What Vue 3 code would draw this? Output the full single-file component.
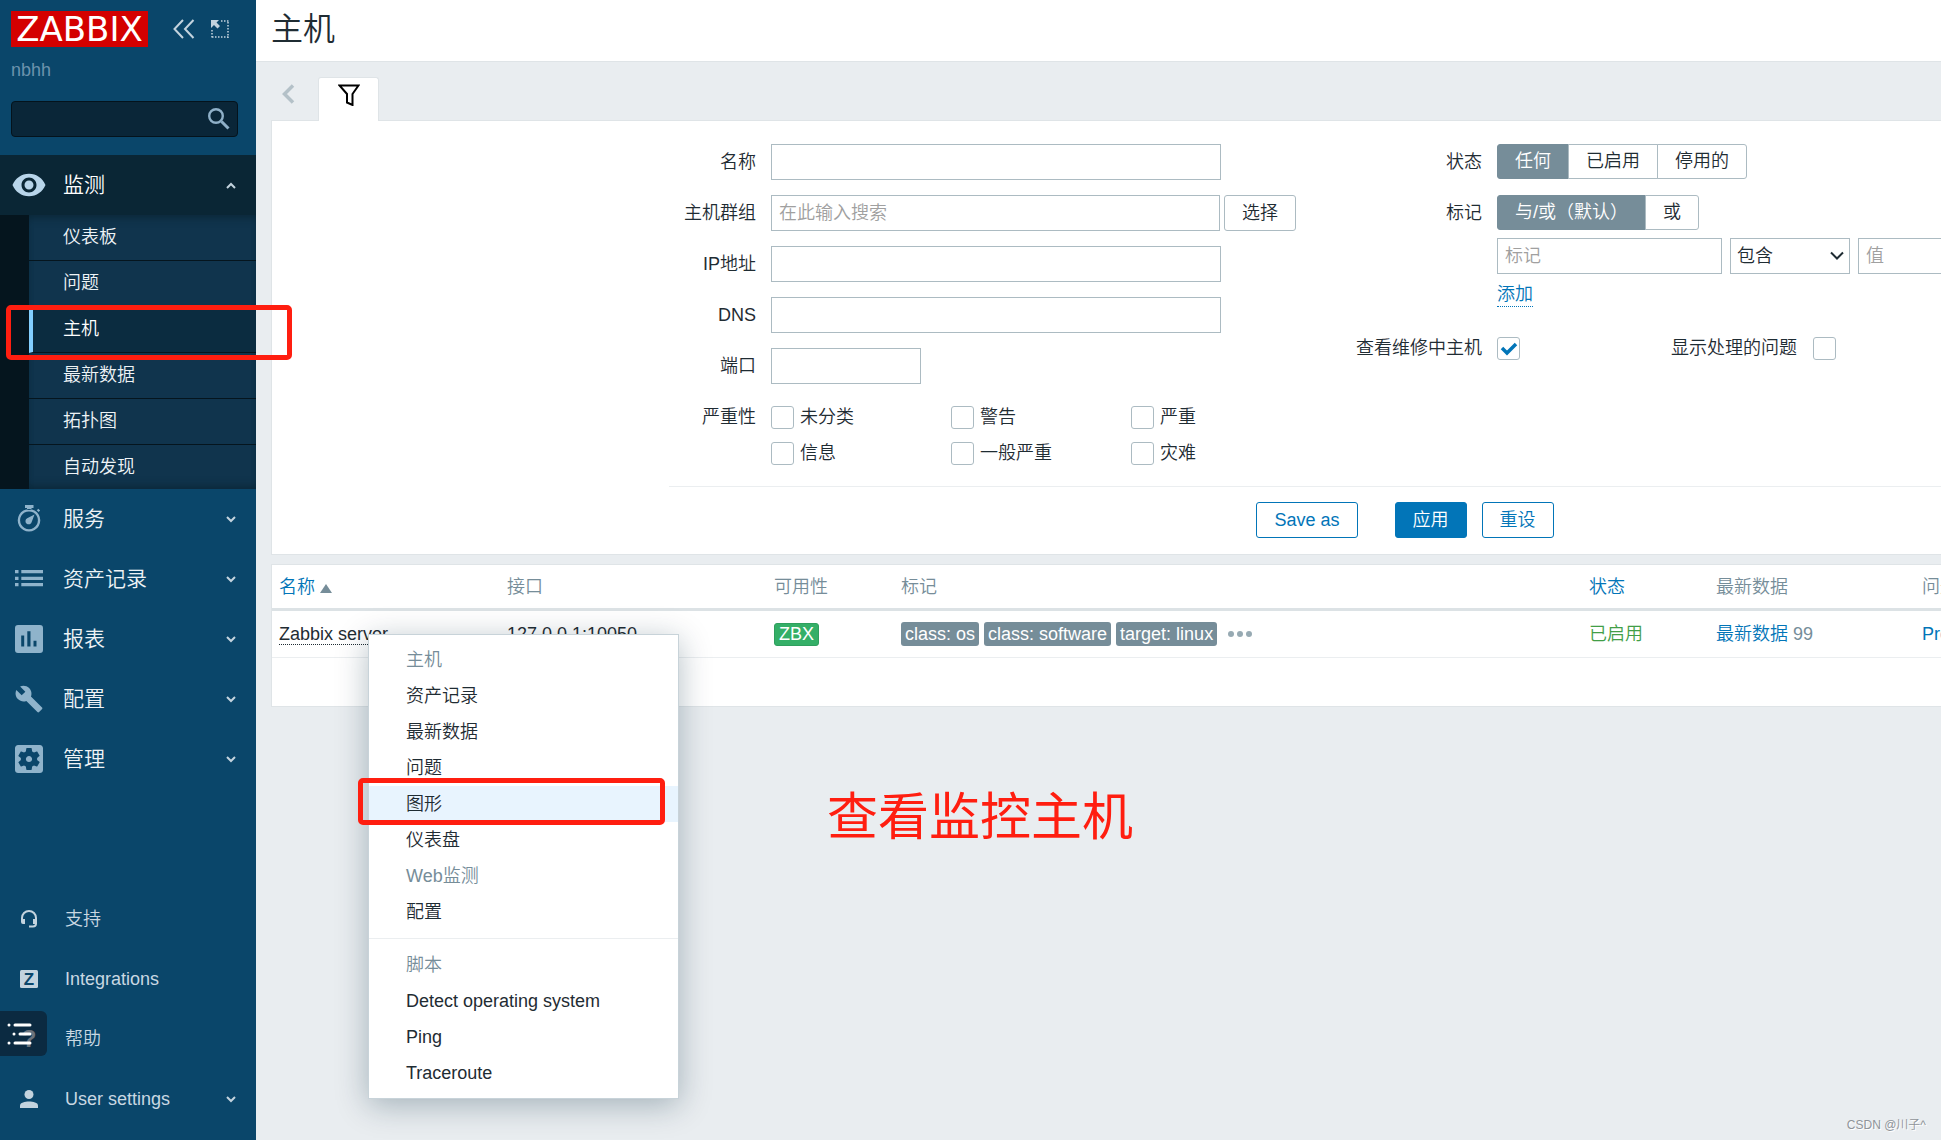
<script setup>
import { ref } from 'vue'

const search = ref('')

const ICONS = {
  eye: {
    box: '0 0 24 24',
    d: 'M12 4.5C7 4.5 2.73 7.61 1 12c1.73 4.39 6 7.5 11 7.5s9.27-3.11 11-7.5c-1.73-4.39-6-7.5-11-7.5zM12 17c-2.76 0-5-2.24-5-5s2.24-5 5-5 5 2.24 5 5-2.24 5-5 5zm0-8c-1.66 0-3 1.34-3 3s1.34 3 3 3 3-1.34 3-3-1.34-3-3-3z',
  },
  timer: {
    box: '0 0 28 28',
    d: 'M10 0h8.500v3h-2v2h-4.500v-2h-2zM14 4a11.300 11.300 0 1 0 .01 0zM14 6.400a8.900 8.900 0 1 1-.01 0zM21.800 5.200l1.500-1.500 1.800 1.800-1.500 1.500zM19.500 9.500l-2.700 7.300a3.200 3.200 0 1 1-4.600-3.500z',
  },
  list: {
    box: '0 0 28 28',
    d: 'M0 5h3.500v3.200H0zM6.300 5H28v3.200H6.300zM0 11.700h3.500v3.200H0zM6.300 11.700H28v3.200H6.300zM0 18h3.500v3.200H0zM6.300 18H28v3.200H6.300z',
  },
  report: {
    box: '0 0 28 28',
    d: 'M3 0h22a3 3 0 0 1 3 3v22a3 3 0 0 1-3 3H3a3 3 0 0 1-3-3V3a3 3 0 0 1 3-3zM6.200 10.500v11h3v-11zM12.300 6.300v15.200h3.200V6.300zM18.500 15.800v5.700h3v-5.700z',
  },
  wrench: {
    box: '0.500 0.500 23 23',
    d: 'M22.700 19l-9.100-9.100c.9-2.300.4-5-1.500-6.900-2-2-5-2.400-7.400-1.300L9 6 6 9 1.600 4.700C.4 7.100.9 10.100 2.900 12.100c1.900 1.900 4.600 2.400 6.900 1.500l9.100 9.100c.4.4 1 .4 1.400 0l2.300-2.300c.5-.4.5-1.100.1-1.400z',
  },
  gear: {
    box: '3 3 18 18',
    d: 'M12 10c-1.100 0-2 .9-2 2s.9 2 2 2 2-.9 2-2-.9-2-2-2zm7-7H5c-1.110 0-2 .9-2 2v14c0 1.100.89 2 2 2h14c1.110 0 2-.9 2-2V5c0-1.100-.89-2-2-2zm-1.750 9c0 .23-.02.46-.05.68l1.480 1.160c.13.11.17.3.08.45l-1.400 2.420c-.09.15-.27.21-.43.15l-1.740-.7c-.36.28-.76.51-1.180.69l-.26 1.850c-.03.17-.18.3-.35.3h-2.800c-.17 0-.32-.13-.35-.29l-.26-1.850c-.43-.18-.82-.41-1.180-.69l-1.740.7c-.16.06-.34 0-.43-.15l-1.400-2.420c-.09-.15-.05-.34.08-.45l1.480-1.160c-.03-.23-.05-.46-.05-.69 0-.23.02-.46.05-.68l-1.480-1.160c-.13-.11-.17-.3-.08-.45l1.400-2.420c.09-.15.27-.21.43-.15l1.740.7c.36-.28.76-.51 1.180-.69l.26-1.850c.03-.17.18-.3.35-.3h2.800c.17 0 .32.13.35.29l.26 1.850c.43.18.82.41 1.180.69l1.740-.7c.16-.06.34 0 .43.15l1.400 2.420c.09.15.05.34-.08.45l-1.480 1.160c.03.23.05.46.05.69z',
  },
}

const subItems = ['仪表板', '问题', '主机', '最新数据', '拓扑图', '自动发现']
const activeSub = '主机'

const menuItems = [
  { label: '服务', icon: 'timer' },
  { label: '资产记录', icon: 'list' },
  { label: '报表', icon: 'report' },
  { label: '配置', icon: 'wrench' },
  { label: '管理', icon: 'gear' },
]

const userItems = [
  { label: '支持', icon: 'headset' },
  { label: 'Integrations', icon: 'z' },
  { label: '帮助', icon: 'help' },
  { label: 'User settings', icon: 'user', arrow: true },
]

const filter = ref({
  name: '',
  group: '',
  ip: '',
  dns: '',
  port: '',
  severities: [],
  status: '任何',
  evaltype: '与/或（默认）',
  tag: '',
  operator: '包含',
  value: '',
  maintenance: true,
  suppressed: false,
})

const severities = ['未分类', '警告', '严重', '信息', '一般严重', '灾难']
const statuses = ['任何', '已启用', '停用的']
const evaltypes = ['与/或（默认）', '或']
const tags = ['class: os', 'class: software', 'target: linux']

const hostMenu = [
  { label: '资产记录' },
  { label: '最新数据' },
  { label: '问题' },
  { label: '图形', hover: true },
  { label: '仪表盘' },
  { label: 'Web监测', disabled: true },
  { label: '配置' },
]
const scriptMenu = ['Detect operating system', 'Ping', 'Traceroute']
</script>

<template>
  <div class="page">
    <aside class="sidebar">
      <div class="sidebar-header">
        <a href="#" class="logo">ZABBIX</a>
        <button type="button" class="icon-btn collapse" aria-label="Hide sidebar">
          <svg width="22" height="20" viewBox="0 0 22 20" fill="none" stroke="#c3d3de" stroke-width="2">
            <path d="M10 1L1.500 10l8.500 9M20.500 1L12 10l8.500 9" />
          </svg>
        </button>
        <button type="button" class="icon-btn" aria-label="Compact sidebar">
          <svg width="18" height="18" viewBox="0 0 18 18">
            <path d="M10 1h8M17 2v16M1 10v8M1 17h17" fill="none" stroke="#c3d3de" stroke-width="1.500" stroke-dasharray="1.500 1.500" />
            <path d="M0 0h8L5.500 2.500 9 6 6.500 8.500 3 5 0 8z" fill="#c3d3de" />
          </svg>
        </button>
      </div>
      <div class="server-name">nbhh</div>

      <form class="search" @submit.prevent>
        <input v-model="search" type="text" aria-label="Search" />
        <button type="submit" class="icon-btn" aria-label="Search">
          <svg width="22" height="22" viewBox="0 0 22 22" fill="none" stroke="#8fb0c8">
            <circle cx="8" cy="8" r="6.800" stroke-width="2.400" />
            <path d="M13.500 13.500l7 7" stroke-width="3" />
          </svg>
        </button>
      </form>

      <nav class="menu">
        <a href="#" class="menu-link open">
          <span class="menu-icon">
            <svg width="36" height="36" :viewBox="ICONS.eye.box"><path :d="ICONS.eye.d" /></svg>
          </span>
          <span class="menu-label">监测</span>
          <svg class="arrow" width="10" height="7" viewBox="0 0 10 7"><path d="M1 6l4-4 4 4" /></svg>
        </a>
        <ul class="submenu">
          <li v-for="item in subItems" :key="item">
            <a href="#" :class="{ active: item === activeSub }">{{ item }}</a>
          </li>
        </ul>
        <a v-for="item in menuItems" :key="item.label" href="#" class="menu-link">
          <span class="menu-icon">
            <svg width="28" height="28" :viewBox="ICONS[item.icon].box">
              <path fill-rule="evenodd" :d="ICONS[item.icon].d" />
            </svg>
          </span>
          <span class="menu-label">{{ item.label }}</span>
          <svg class="arrow" width="10" height="7" viewBox="0 0 10 7"><path d="M1 1l4 4 4-4" /></svg>
        </a>
      </nav>

      <nav class="user-menu">
        <a v-for="item in userItems" :key="item.label" href="#" class="user-link">
          <span class="user-icon">
            <svg v-if="item.icon === 'headset'" width="18" height="18" viewBox="0 0 18 18">
              <path d="M2 11V8a7 7 0 0 1 14 0v5.500a3 3 0 0 1-3 3H9" fill="none" stroke="#c3d3de" stroke-width="2" />
              <path d="M1 9h4v5H3a2 2 0 0 1-2-2zM13 9h4v5h-4z" />
            </svg>
            <svg v-else-if="item.icon === 'z'" width="18" height="18" viewBox="0 0 18 18">
              <rect width="18" height="18" rx="1.500" />
              <text x="9" y="15" class="z-mark">Z</text>
            </svg>
            <span v-else-if="item.icon === 'help'" class="help-mark">?</span>
            <svg v-else width="18" height="18" viewBox="0 0 18 18">
              <circle cx="9" cy="4.500" r="4.500" />
              <path d="M0 18v-2.500C0 12.500 5 11.500 9 11.500s9 1 9 4V18z" />
            </svg>
          </span>
          <span class="user-label">{{ item.label }}</span>
          <svg v-if="item.arrow" class="arrow" width="10" height="7" viewBox="0 0 10 7"><path d="M1 1l4 4 4-4" /></svg>
        </a>
      </nav>
    </aside>

    <main class="main">
      <header class="page-title">
        <h1>主机</h1>
      </header>

      <div class="content">
        <div class="tabs">
          <button type="button" class="icon-btn tab-prev" aria-label="Previous">
            <svg width="14" height="20" viewBox="0 0 14 20" fill="none" stroke="#b4c1c8" stroke-width="3.500">
              <path d="M12 1.500L3.500 10l8.500 8.500" />
            </svg>
          </button>
          <button type="button" class="tab" aria-label="Filter">
            <svg width="22" height="22" viewBox="0 0 22 22" fill="none" stroke="#000" stroke-width="2">
              <path d="M1.500 1.500h19l-6 8.500v11l-5.500-2.500V10z" />
            </svg>
          </button>
        </div>

        <section class="panel filter">
          <form @submit.prevent>
            <div class="filter-columns">
              <div class="fields">
                <label for="name">名称</label>
                <input id="name" v-model="filter.name" type="text" class="wide" />

                <label for="group">主机群组</label>
                <div class="inline">
                  <input id="group" v-model="filter.group" type="text" class="wide" placeholder="在此输入搜索" />
                  <button type="button" class="btn grey">选择</button>
                </div>

                <label for="ip">IP地址</label>
                <input id="ip" v-model="filter.ip" type="text" class="wide" />

                <label for="dns">DNS</label>
                <input id="dns" v-model="filter.dns" type="text" class="wide" />

                <label for="port">端口</label>
                <input id="port" v-model="filter.port" type="text" class="narrow" />

                <span class="field-label">严重性</span>
                <div class="severities">
                  <label v-for="s in severities" :key="s">
                    <input v-model="filter.severities" type="checkbox" :value="s" />
                    {{ s }}
                  </label>
                </div>
              </div>

              <div class="fields">
                <span class="field-label">状态</span>
                <div class="segments">
                  <label v-for="s in statuses" :key="s" :class="{ on: filter.status === s }">
                    <input v-model="filter.status" type="radio" name="status" :value="s" />{{ s }}
                  </label>
                </div>

                <span class="field-label">标记</span>
                <div class="tag-filter">
                  <div class="segments">
                    <label v-for="e in evaltypes" :key="e" :class="{ on: filter.evaltype === e }">
                      <input v-model="filter.evaltype" type="radio" name="evaltype" :value="e" />{{ e }}
                    </label>
                  </div>
                  <div class="tag-row">
                    <input v-model="filter.tag" type="text" placeholder="标记" aria-label="标记" />
                    <div class="select-wrap">
                      <select v-model="filter.operator" aria-label="操作">
                        <option>包含</option>
                      </select>
                      <svg width="14" height="10" viewBox="0 0 14 10"><path d="M1 1.500l6 6 6-6" /></svg>
                    </div>
                    <input v-model="filter.value" type="text" placeholder="值" aria-label="值" />
                  </div>
                  <a href="#" class="dotted">添加</a>
                </div>

                <label for="maintenance">查看维修中主机</label>
                <div class="checks">
                  <input id="maintenance" v-model="filter.maintenance" type="checkbox" />
                  <label for="suppressed">显示处理的问题</label>
                  <input id="suppressed" v-model="filter.suppressed" type="checkbox" />
                </div>
              </div>
            </div>

            <div class="filter-buttons">
              <button type="button" class="btn save">Save as</button>
              <button type="submit" class="btn primary">应用</button>
              <button type="reset" class="btn">重设</button>
            </div>
          </form>
        </section>

        <section class="panel hosts">
          <table>
            <colgroup>
              <col class="c-name" />
              <col class="c-interface" />
              <col class="c-short" />
              <col class="c-tags" />
              <col class="c-short" />
              <col class="c-data" />
              <col />
            </colgroup>
            <thead>
              <tr>
                <th><a href="#">名称 <i class="sort"></i></a></th>
                <th>接口</th>
                <th>可用性</th>
                <th>标记</th>
                <th><a href="#">状态</a></th>
                <th>最新数据</th>
                <th>问题</th>
              </tr>
            </thead>
            <tbody>
              <tr>
                <td><a href="#" class="dotted host">Zabbix server</a></td>
                <td>127.0.0.1:10050</td>
                <td><span class="zbx">ZBX</span></td>
                <td>
                  <div class="tag-list">
                    <span v-for="t in tags" :key="t" class="tag">{{ t }}</span>
                    <button type="button" class="icon-btn more" aria-label="More tags">
                      <svg width="24" height="8" viewBox="0 0 24 8" fill="#97aab3">
                        <circle cx="3" cy="4" r="3" />
                        <circle cx="12" cy="4" r="3" />
                        <circle cx="21" cy="4" r="3" />
                      </svg>
                    </button>
                  </div>
                </td>
                <td><a href="#" class="enabled">已启用</a></td>
                <td><a href="#">最新数据</a> <span class="count">99</span></td>
                <td><a href="#">Problems</a></td>
              </tr>
            </tbody>
          </table>
          <div class="table-footer"></div>
        </section>
      </div>
    </main>

    <div class="popup">
      <h3>主机</h3>
      <a
        v-for="item in hostMenu"
        :key="item.label"
        href="#"
        :class="{ hover: item.hover, disabled: item.disabled }"
      >{{ item.label }}</a>
      <hr />
      <h3>脚本</h3>
      <a v-for="item in scriptMenu" :key="item" href="#">{{ item }}</a>
    </div>

    <button type="button" class="toc" aria-label="Contents">
      <svg width="26" height="24" viewBox="0 0 26 24" stroke="#fff" stroke-width="3" stroke-linecap="round">
        <path d="M2 3h.01M8 3h15M7 12h.01M13 12h10M2 21h.01M8 21h15" />
      </svg>
    </button>

    <div class="mark mark-menu"></div>
    <div class="mark mark-popup"></div>
    <div class="note">查看监控主机</div>
    <div class="watermark">CSDN @川子^</div>
  </div>
</template>

<style>
body {
  margin: 0;
}
</style>

<style scoped>
* {
  box-sizing: border-box;
}

.page {
  position: relative;
  display: flex;
  min-height: 100vh;
  overflow: hidden;
  background: #e9edf0;
  color: #1f2c33;
  font-family: Arial, 'Liberation Sans', 'Noto Sans CJK SC', sans-serif;
  font-size: 18px;
  font-weight: 350;
  line-height: 24px;
}

a {
  color: #0275b8;
  text-decoration: none;
}

button,
input,
select {
  font: inherit;
  color: inherit;
}

.icon-btn {
  display: flex;
  padding: 0;
  border: none;
  background: none;
  cursor: pointer;
}

/* Sidebar */
.sidebar {
  display: flex;
  flex-direction: column;
  flex: 0 0 256px;
  min-width: 0;
  min-height: 100vh;
  background: #0a466a;
}

.sidebar-header {
  display: flex;
  align-items: center;
  padding: 11px 11px 0;
}

.logo {
  width: 137px;
  height: 36px;
  background: #d40000;
  color: #fff;
  font-family: 'DejaVu Sans', sans-serif;
  font-size: 34px;
  font-weight: 400;
  line-height: 36px;
  text-align: center;
}

.collapse {
  margin: 0 16px 0 25px;
}

.server-name {
  padding: 11px 11px 0;
  color: #6c93ad;
}

.search {
  display: flex;
  align-items: center;
  height: 36px;
  margin: 19px 18px 18px 11px;
  padding-right: 7px;
  border: 1px solid #04131c;
  border-radius: 4px;
  background: #0a2638;
}

.menu-link,
.user-link {
  display: flex;
  align-items: center;
  height: 60px;
  padding-right: 20px;
}

.menu-link {
  color: #eef3f6;
  font-size: 21px;
}

.menu-icon,
.user-icon {
  display: flex;
  justify-content: center;
  flex: 0 0 58px;
  fill: #8fb3cb;
}

.menu-label,
.user-label {
  flex: 1;
  padding-left: 5px;
}

.menu-link.open {
  background: #0a2635;
  color: #fff;
}

.menu-link.open .menu-icon {
  fill: #b8d5ea;
}

.arrow {
  fill: none;
  stroke: #c3d3de;
  stroke-width: 2;
}

.submenu {
  margin: 0;
  padding: 0;
  border-left: 29px solid #05151e;
  background: #10344d;
  box-shadow: inset 0 8px 10px -6px #0a2635, inset 0 -8px 10px -6px #0a2635;
  list-style: none;
}

.submenu a {
  display: block;
  height: 46px;
  padding-left: 34px;
  border-bottom: 1px solid #05151e;
  color: #eef3f6;
  line-height: 45px;
}

.submenu li:last-child a {
  height: 44px;
  border-bottom: none;
}

.submenu a.active {
  padding-left: 30px;
  border-left: 4px solid #83cfff;
  background: #0b2c40;
  color: #fff;
}

.user-menu {
  margin-top: auto;
  padding-bottom: 11px;
}

.user-link {
  color: #c9d8e2;
}

.user-icon {
  fill: #c3d3de;
}

.user-label {
  padding-left: 7px;
}

.z-mark {
  fill: #0a466a;
  font-size: 17px;
  font-weight: 700;
  text-anchor: middle;
}

.help-mark {
  font-size: 24px;
  font-weight: 700;
}

/* Main area */
.main {
  flex: 1;
  min-width: 0;
  overflow: hidden;
}

.page-title {
  height: 62px;
  padding: 0 15px;
  border-bottom: 1px solid #dfe4e7;
  background: #fff;
}

.page-title h1 {
  margin: 0;
  font-size: 32px;
  font-weight: 350;
  line-height: 58px;
}

/* the filter and table are wider than the window and run off its right edge */
.content {
  min-width: 2298px;
  padding: 15px;
}

.tabs {
  display: flex;
  align-items: flex-end;
  height: 43px;
}

.tab-prev {
  margin: 0 23px 16px 10px;
}

.tab {
  position: relative;
  z-index: 1;
  display: flex;
  justify-content: center;
  width: 61px;
  height: 44px;
  margin-bottom: -1px;
  padding: 6px 0;
  border: 1px solid #dfe4e7;
  border-bottom: none;
  border-radius: 3px 3px 0 0;
  background: #fff;
}

.panel {
  border: 1px solid #dfe4e7;
  background: #fff;
}

.filter {
  margin-bottom: 9px;
}

.filter form {
  width: 1472px;
  margin: 0 auto;
}

.filter-columns {
  display: flex;
  align-items: flex-start;
  gap: 60px;
  padding: 23px 0 15px;
}

.fields {
  display: grid;
  grid-template-columns: minmax(87px, auto) auto;
  gap: 15px;
}

.fields > label,
.field-label {
  text-align: right;
  line-height: 36px;
}

input[type='text'],
select {
  height: 36px;
  padding: 0 7px;
  border: 1px solid #acbbc2;
  border-radius: 0;
  outline: none;
  background: #fff;
}

.search input[type='text'] {
  flex: 1;
  min-width: 0;
  height: 34px;
  border: none;
  background: none;
  color: #fff;
}

input::placeholder {
  color: #a0a0a0;
  opacity: 1;
}

.wide {
  width: 450px;
}

.narrow {
  width: 150px;
}

.inline {
  display: flex;
  gap: 4px;
  width: 525px;
}

.btn {
  height: 36px;
  padding: 0 17px;
  border: 1px solid #0275b8;
  border-radius: 3px;
  background: #fff;
  color: #0275b8;
  line-height: 32px;
  white-space: nowrap;
  cursor: pointer;
}

.btn.grey {
  border-color: #acbbc2;
  color: #1f2c33;
}

.btn.primary {
  background: #0275b8;
  color: #fff;
}

input[type='checkbox'] {
  flex: none;
  width: 23px;
  height: 23px;
  margin: 0;
  border: 1px solid #acbbc2;
  border-radius: 3px;
  background: #fff;
  appearance: none;
}

input[type='checkbox']:checked {
  background: #fff url("data:image/svg+xml,%3Csvg xmlns='http://www.w3.org/2000/svg' viewBox='0 0 21 21'%3E%3Cpath d='M4 10l5 5 9-9' fill='none' stroke='%230275b8' stroke-width='3.500'/%3E%3C/svg%3E") center / 21px;
}

.severities {
  display: grid;
  grid-template-columns: 180px 180px 165px;
}

.severities label {
  display: flex;
  align-items: center;
  gap: 6px;
  height: 36px;
}

.segments {
  display: flex;
  width: max-content;
}

.segments label {
  height: 35px;
  margin-left: -1px;
  padding: 0 17px;
  border: 1px solid #acbbc2;
  background: #fff;
  line-height: 32px;
}

.segments label:first-child {
  margin-left: 0;
  border-radius: 3px 0 0 3px;
}

.segments label:last-child {
  border-radius: 0 3px 3px 0;
}

.segments label.on {
  border-color: #768d99;
  background: #768d99;
  color: #fff;
}

.segments input {
  position: absolute;
  opacity: 0;
  pointer-events: none;
}

.tag-filter {
  display: flex;
  flex-direction: column;
  align-items: flex-start;
  gap: 8px;
  padding-bottom: 8px;
}

.tag-row {
  display: flex;
  gap: 8px;
}

.tag-row input {
  width: 225px;
}

.select-wrap {
  position: relative;
  display: flex;
}

.select-wrap select {
  width: 120px;
  padding: 0 6px;
  appearance: none;
}

.select-wrap svg {
  position: absolute;
  top: 13px;
  right: 6px;
  fill: none;
  stroke: #1f2c33;
  stroke-width: 2;
  pointer-events: none;
}

.dotted {
  border-bottom: 1px dotted currentColor;
}

.dotted.host {
  color: #1f2c33;
}

.checks {
  display: flex;
  align-items: center;
  height: 36px;
}

.checks label {
  margin: 0 16px 0 151px;
}

.filter-buttons {
  display: flex;
  justify-content: center;
  gap: 15px;
  padding: 15px 0 16px;
  border-top: 1px solid #ebeef0;
}

.btn.save {
  margin-right: 22px;
}

/* Host table */
table {
  width: 100%;
  border-collapse: separate;
  border-spacing: 0;
  table-layout: fixed;
}

.c-name {
  width: 228px;
}

.c-interface {
  width: 267px;
}

.c-short {
  width: 127px;
}

.c-tags {
  width: 688px;
}

.c-data {
  width: 206px;
}

th,
td {
  padding: 0 7px;
  text-align: left;
  font-weight: 350;
  white-space: nowrap;
}

th {
  height: 46px;
  border-bottom: 3px solid #dce2e5;
  color: #768d99;
}

td {
  height: 47px;
  border-bottom: 1px solid #ebeef0;
}

.sort {
  display: inline-block;
  border: 6px solid transparent;
  border-top: none;
  border-bottom: 9px solid #768d99;
}

.zbx {
  display: inline-block;
  height: 23px;
  padding: 0 4px;
  border: 1px solid #2f9f5e;
  border-radius: 3px;
  background: #34af67;
  color: #fff;
  line-height: 21px;
}

.tag-list {
  display: flex;
  align-items: center;
  gap: 5px;
}

.tag {
  padding: 0 4px;
  border-radius: 3px;
  background: #768d99;
  color: #fff;
}

.more {
  margin-left: 6px;
}

.enabled {
  color: #429e47;
}

.count {
  color: #768d99;
}

.table-footer {
  height: 48px;
}

/* Host context menu */
.popup {
  position: absolute;
  top: 634px;
  left: 368px;
  width: 311px;
  padding: 7px 0;
  border: 1px solid #c8d3d9;
  background: #fff;
  box-shadow: 0 6px 30px rgba(0, 40, 60, 0.3);
}

.popup h3,
.popup a {
  display: block;
  height: 36px;
  margin: 0;
  padding: 0 37px;
  color: #1f2c33;
  font-size: 18px;
  font-weight: 350;
  line-height: 36px;
}

.popup h3,
.popup a.disabled {
  color: #768d99;
}

.popup a.hover {
  background: #e8f4fe;
}

.popup hr {
  margin: 8px 0;
  border: none;
  border-top: 1px solid #ebeef0;
}

.toc {
  position: absolute;
  top: 1011px;
  left: 0;
  width: 47px;
  height: 45px;
  padding: 0 0 0 7px;
  border: none;
  border-radius: 0 6px 6px 0;
  background: rgba(12, 14, 24, 0.5);
  text-align: left;
}

.toc svg {
  display: block;
}

/* Annotations */
.mark {
  position: absolute;
  border: 5px solid #ff1e10;
  border-radius: 5px;
  pointer-events: none;
}

.mark-menu {
  top: 305px;
  left: 6px;
  width: 286px;
  height: 55px;
}

.mark-popup {
  top: 778px;
  left: 358px;
  width: 307px;
  height: 47px;
}

.note {
  position: absolute;
  top: 788px;
  left: 827px;
  color: #ff1e10;
  font-size: 51px;
  font-weight: 400;
  line-height: 60px;
}

.watermark {
  position: absolute;
  right: 15px;
  bottom: 3px;
  color: #8f9499;
  font-size: 12px;
  text-shadow: 1px 1px 0 #fff;
}
</style>
